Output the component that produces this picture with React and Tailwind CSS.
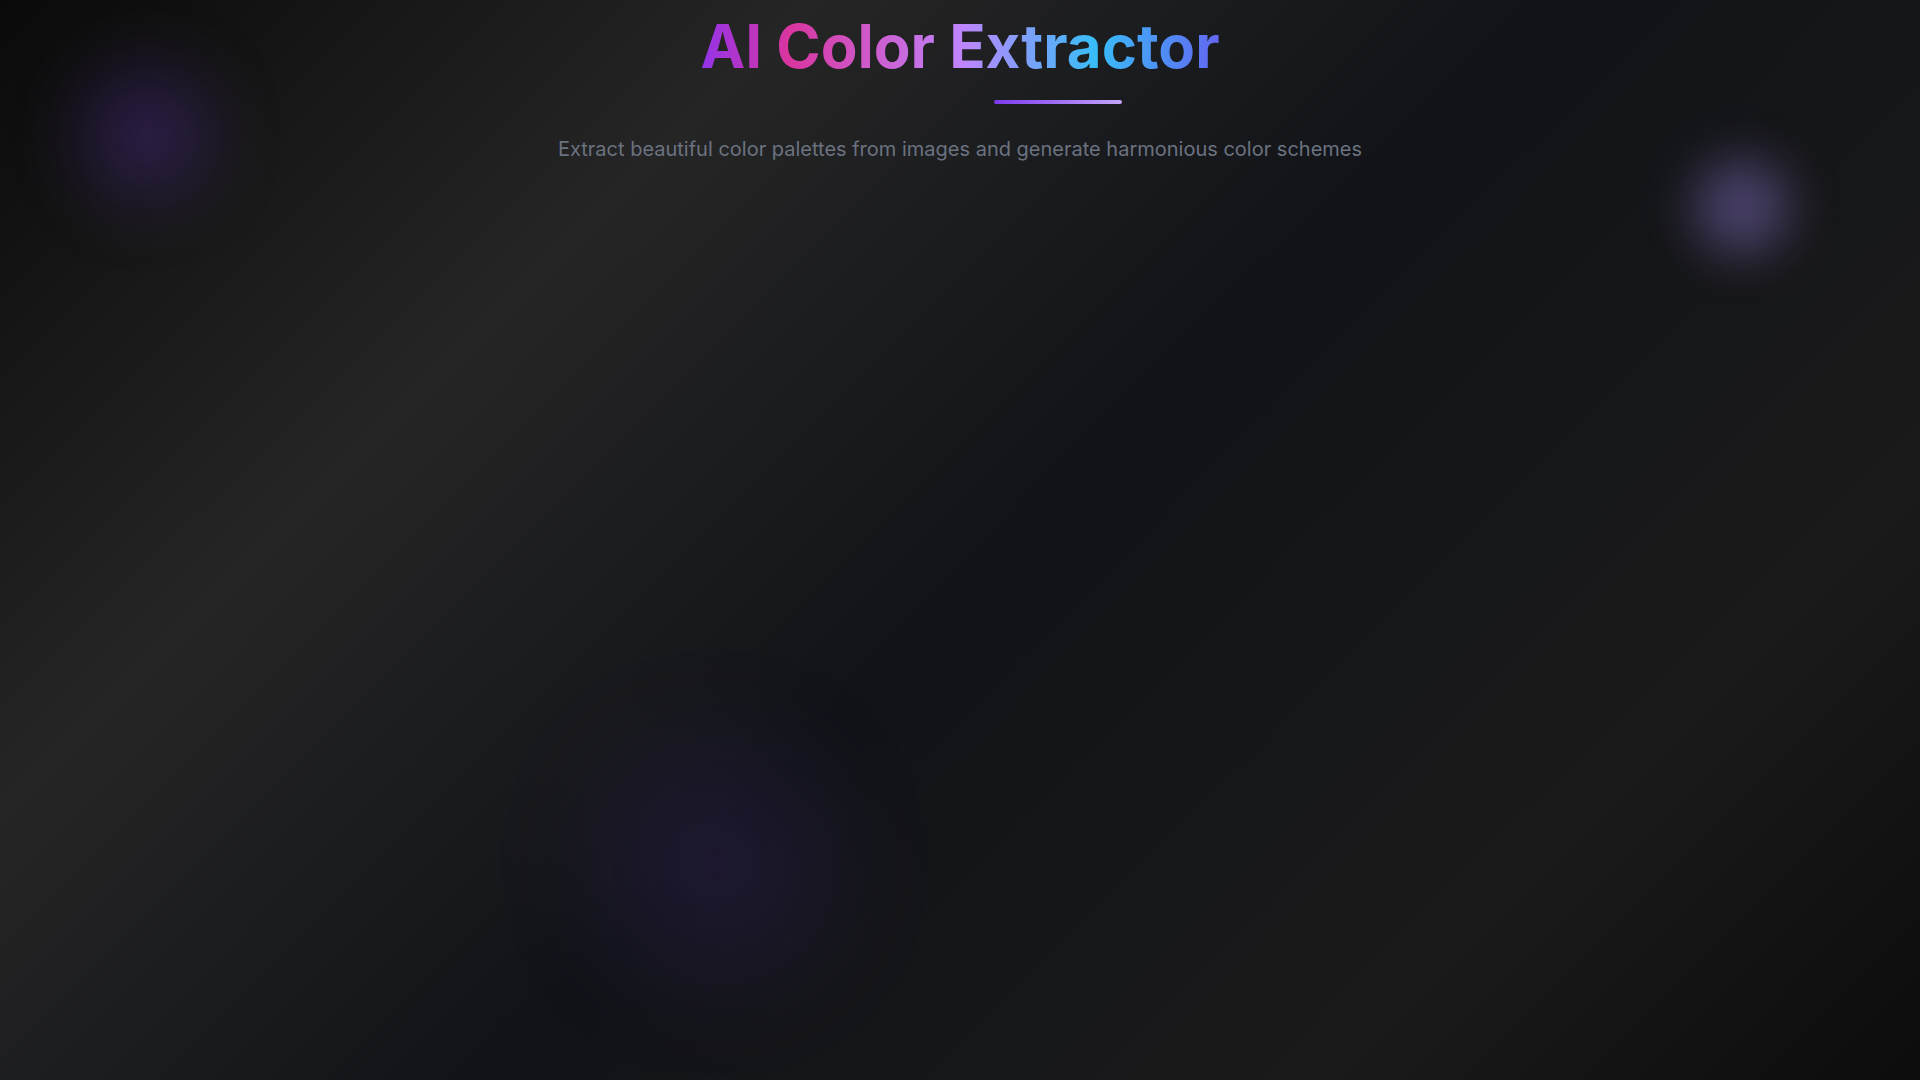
import React from "react";

const Blob = ({ className }) => (
    <div className={`pointer-events-none absolute rounded-full ${className}`} />
);

const App = () => {
    return (
        <div className="relative min-h-screen w-full overflow-hidden bg-[linear-gradient(135deg,#0a0a0a_0%,#252525_27%,#111318_52%,#1a1a1a_80%,#0c0c0c_100%)] font-['Inter','Noto_Sans',sans-serif]">
            {/* floating glow blobs */}
            <Blob className="left-[90px] top-[78px] h-28 w-28 bg-[#7c3aed]/30 blur-2xl" />
            <Blob className="left-[1694px] top-[159px] h-24 w-24 bg-[#a78bfa]/35 blur-xl" />
            <Blob className="left-[619px] top-[767px] h-48 w-48 bg-[#7c3aed]/15 blur-3xl" />

            <div className="relative mx-auto flex flex-col items-center pt-4">
                <h1 className="bg-[linear-gradient(to_right,#9333ea_0%,#d9359f_17%,#c084fc_50%,#38bdf8_76%,#6366f1_100%)] bg-clip-text text-6xl font-bold leading-none text-transparent">
                    AI Color Extractor
                </h1>

                <div className="mt-6 flex w-full justify-center">
                    <div className="ml-[196px] h-1 w-32 rounded-full bg-[linear-gradient(to_right,#7c3aed,#c4a5fb)]" />
                </div>

                <p className="mt-[31px] text-xl text-[#6b7280]">
                    Extract beautiful color palettes from images and generate harmonious color schemes
                </p>
            </div>
        </div>
    );
};

export default App;
